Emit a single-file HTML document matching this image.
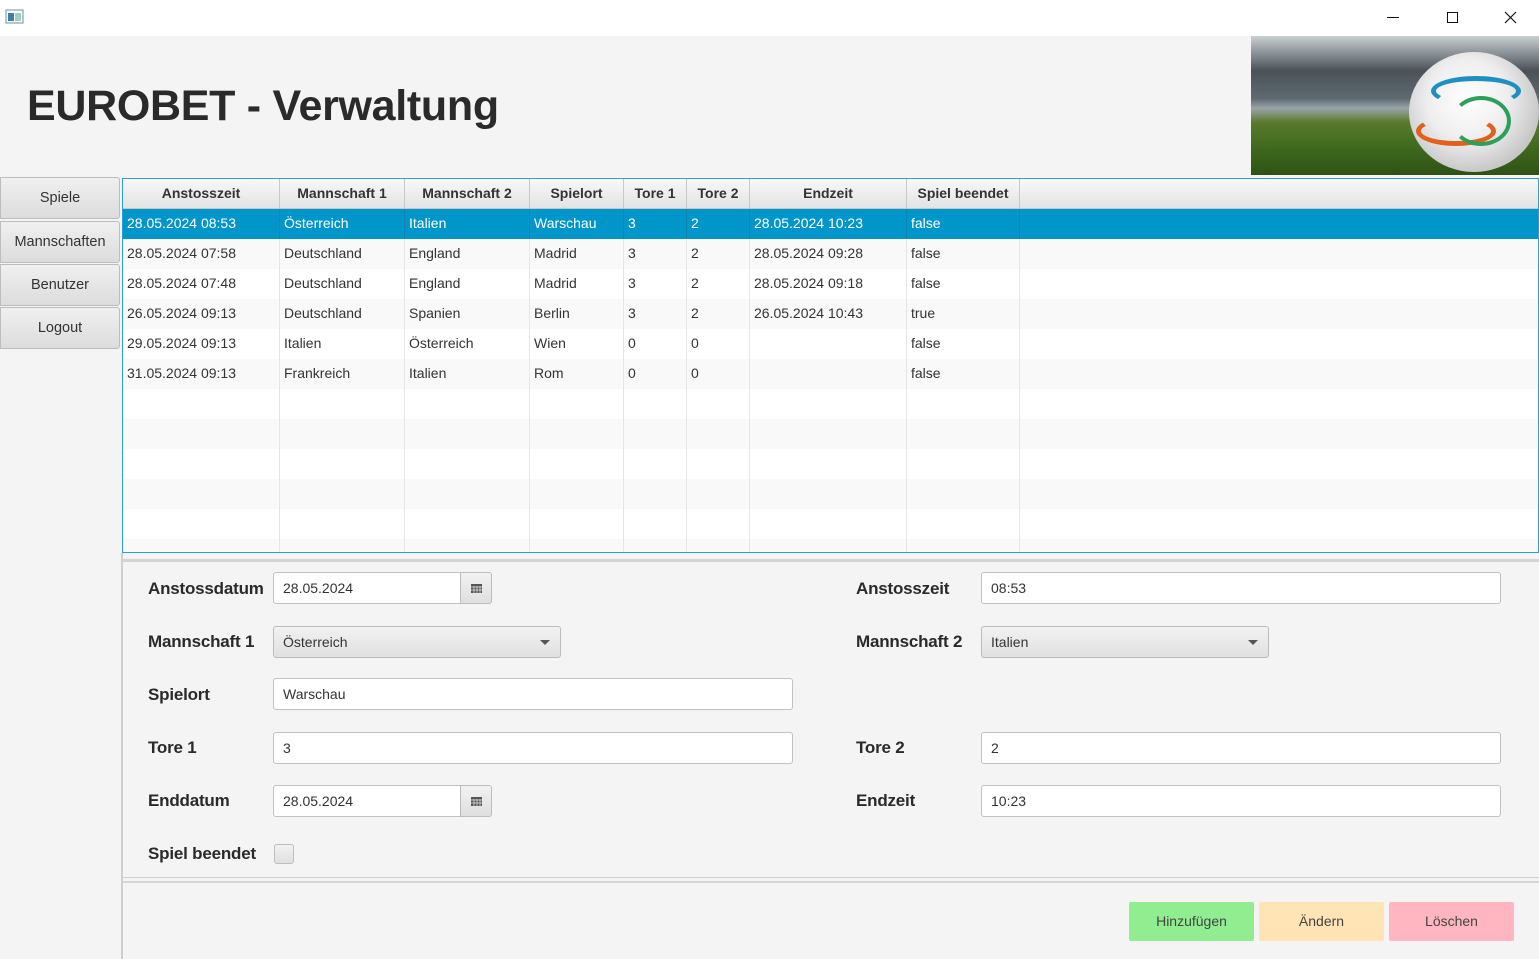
<!DOCTYPE html>
<html><head><meta charset="utf-8"><style>
*{box-sizing:border-box;margin:0;padding:0}
body{width:1539px;height:959px;background:#f4f4f4;font-family:"Liberation Sans",sans-serif;position:relative;overflow:hidden;color:#333}
.abs{position:absolute}
.tb{left:0;top:0;width:1539px;height:36px;background:#fff}
h1{position:absolute;left:27px;top:82px;font-size:43px;font-weight:bold;color:#2a2a2a;letter-spacing:-0.3px}
.nav{left:0;width:120px;height:42px;background:linear-gradient(#f0f0f0,#dcdcdc);border:1px solid #bdbdbd;border-radius:0 3px 3px 0;font-size:14.5px;text-align:center;line-height:40px;color:#333}
.tbl{left:122px;top:178px;width:1417px;height:375px;border:1px solid #2a9fd6;background:#fff;overflow:hidden}
.row{position:absolute;left:0;width:1417px;height:30px;font-size:14px;line-height:29px}
.row span{position:absolute;top:0;height:30px;padding-left:4px;border-right:1px solid #e6e6e6}
.hdr{background:linear-gradient(#f8f8f8,#e3e3e3);font-weight:bold;border-bottom:1px solid #c8c8c8}
.hdr span{text-align:center;padding:0;border-right:1px solid #c8c8c8}
.sel{background:#0096c9;color:#fff}
.sel span{border-right-color:#0a86b3}
.lbl{font-size:17px;font-weight:bold;color:#2a2a2a;letter-spacing:-0.2px}
.inp{background:#fff;border:1px solid #c2c2c2;border-radius:3px;height:32px;font-size:14px;line-height:30px;padding-left:9px}
.cmb{background:linear-gradient(#f2f2f2,#e0e0e0);border:1px solid #bcbcbc;border-radius:3px;height:32px;font-size:14px;line-height:30px;padding-left:9px}
.cal{background:linear-gradient(#f2f2f2,#dfdfdf);border:1px solid #bcbcbc;border-radius:0 3px 3px 0;width:32px;height:32px}
.btn{top:902px;height:39px;width:125px;font-size:14px;text-align:center;line-height:39px;color:#444;border-radius:2px}
</style></head><body>
<div class="abs tb">
<svg class="abs" style="left:5px;top:9px" width="20" height="16"><rect x="1" y="1" width="17" height="13" fill="#fff" stroke="#6a8fa8"/><rect x="3" y="4" width="6" height="8" fill="#3a7fa8"/><rect x="10" y="4" width="6" height="8" fill="#9fd0c0"/></svg>
<svg class="abs" style="left:1385px;top:10px" width="140" height="16"><line x1="2" y1="7.5" x2="14" y2="7.5" stroke="#111"/><rect x="62.5" y="2.5" width="10" height="10" fill="none" stroke="#111"/><path d="M120 2 L131 13 M131 2 L120 13" stroke="#111" stroke-width="1.2"/></svg>
</div>
<h1>EUROBET - Verwaltung</h1>
<div class="abs" style="left:1251px;top:36px;width:288px;height:139px;overflow:hidden;background:linear-gradient(#c9cfd2 0%,#8d9499 12%,#4b5257 25%,#5d6a70 45%,#9aa4a8 52%,#5b7a2e 62%,#3f6a1d 80%,#2e5214 100%)">
<div class="abs" style="left:158px;top:16px;width:130px;height:120px;border-radius:50%;background:radial-gradient(circle at 45% 40%,#fff 0%,#eee 40%,#bdbdbd 80%,#777 100%)"></div>
<div class="abs" style="left:180px;top:40px;width:90px;height:30px;border:5px solid #1e8fc0;border-radius:50%;border-bottom-color:transparent"></div>
<div class="abs" style="left:165px;top:80px;width:80px;height:30px;border:5px solid #e0601e;border-radius:50%;border-top-color:transparent"></div>
<div class="abs" style="left:200px;top:60px;width:60px;height:50px;border:4px solid #2aa05a;border-radius:50%;border-left-color:transparent"></div>
</div>
<div class="abs nav" style="top:177px">Spiele</div>
<div class="abs nav" style="top:221px">Mannschaften</div>
<div class="abs nav" style="top:264px">Benutzer</div>
<div class="abs nav" style="top:307px">Logout</div>
<div class="abs" style="left:121px;top:553px;width:2px;height:406px;background:#cfcfcf"></div>
<div class="abs tbl">
<div class="row hdr" style="top:0"><span style="left:0;width:157px">Anstosszeit</span><span style="left:157px;width:125px">Mannschaft 1</span><span style="left:282px;width:125px">Mannschaft 2</span><span style="left:407px;width:94px">Spielort</span><span style="left:501px;width:63px">Tore 1</span><span style="left:564px;width:63px">Tore 2</span><span style="left:627px;width:157px">Endzeit</span><span style="left:784px;width:113px">Spiel beendet</span></div>
<div class="row sel" style="top:30px"><span style="left:0;width:157px">28.05.2024 08:53</span><span style="left:157px;width:125px">Österreich</span><span style="left:282px;width:125px">Italien</span><span style="left:407px;width:94px">Warschau</span><span style="left:501px;width:63px">3</span><span style="left:564px;width:63px">2</span><span style="left:627px;width:157px">28.05.2024 10:23</span><span style="left:784px;width:113px">false</span></div>
<div class="row" style="top:60px;background:#f9f9f9"><span style="left:0;width:157px">28.05.2024 07:58</span><span style="left:157px;width:125px">Deutschland</span><span style="left:282px;width:125px">England</span><span style="left:407px;width:94px">Madrid</span><span style="left:501px;width:63px">3</span><span style="left:564px;width:63px">2</span><span style="left:627px;width:157px">28.05.2024 09:28</span><span style="left:784px;width:113px">false</span></div>
<div class="row" style="top:90px"><span style="left:0;width:157px">28.05.2024 07:48</span><span style="left:157px;width:125px">Deutschland</span><span style="left:282px;width:125px">England</span><span style="left:407px;width:94px">Madrid</span><span style="left:501px;width:63px">3</span><span style="left:564px;width:63px">2</span><span style="left:627px;width:157px">28.05.2024 09:18</span><span style="left:784px;width:113px">false</span></div>
<div class="row" style="top:120px;background:#f9f9f9"><span style="left:0;width:157px">26.05.2024 09:13</span><span style="left:157px;width:125px">Deutschland</span><span style="left:282px;width:125px">Spanien</span><span style="left:407px;width:94px">Berlin</span><span style="left:501px;width:63px">3</span><span style="left:564px;width:63px">2</span><span style="left:627px;width:157px">26.05.2024 10:43</span><span style="left:784px;width:113px">true</span></div>
<div class="row" style="top:150px"><span style="left:0;width:157px">29.05.2024 09:13</span><span style="left:157px;width:125px">Italien</span><span style="left:282px;width:125px">Österreich</span><span style="left:407px;width:94px">Wien</span><span style="left:501px;width:63px">0</span><span style="left:564px;width:63px">0</span><span style="left:627px;width:157px"></span><span style="left:784px;width:113px">false</span></div>
<div class="row" style="top:180px;background:#f9f9f9"><span style="left:0;width:157px">31.05.2024 09:13</span><span style="left:157px;width:125px">Frankreich</span><span style="left:282px;width:125px">Italien</span><span style="left:407px;width:94px">Rom</span><span style="left:501px;width:63px">0</span><span style="left:564px;width:63px">0</span><span style="left:627px;width:157px"></span><span style="left:784px;width:113px">false</span></div>
<div class="row" style="top:210px"><span style="left:0;width:157px"></span><span style="left:157px;width:125px"></span><span style="left:282px;width:125px"></span><span style="left:407px;width:94px"></span><span style="left:501px;width:63px"></span><span style="left:564px;width:63px"></span><span style="left:627px;width:157px"></span><span style="left:784px;width:113px"></span></div>
<div class="row" style="top:240px;background:#f9f9f9"><span style="left:0;width:157px"></span><span style="left:157px;width:125px"></span><span style="left:282px;width:125px"></span><span style="left:407px;width:94px"></span><span style="left:501px;width:63px"></span><span style="left:564px;width:63px"></span><span style="left:627px;width:157px"></span><span style="left:784px;width:113px"></span></div>
<div class="row" style="top:270px"><span style="left:0;width:157px"></span><span style="left:157px;width:125px"></span><span style="left:282px;width:125px"></span><span style="left:407px;width:94px"></span><span style="left:501px;width:63px"></span><span style="left:564px;width:63px"></span><span style="left:627px;width:157px"></span><span style="left:784px;width:113px"></span></div>
<div class="row" style="top:300px;background:#f9f9f9"><span style="left:0;width:157px"></span><span style="left:157px;width:125px"></span><span style="left:282px;width:125px"></span><span style="left:407px;width:94px"></span><span style="left:501px;width:63px"></span><span style="left:564px;width:63px"></span><span style="left:627px;width:157px"></span><span style="left:784px;width:113px"></span></div>
<div class="row" style="top:330px"><span style="left:0;width:157px"></span><span style="left:157px;width:125px"></span><span style="left:282px;width:125px"></span><span style="left:407px;width:94px"></span><span style="left:501px;width:63px"></span><span style="left:564px;width:63px"></span><span style="left:627px;width:157px"></span><span style="left:784px;width:113px"></span></div>
<div class="row" style="top:360px;background:#f9f9f9"><span style="left:0;width:157px"></span><span style="left:157px;width:125px"></span><span style="left:282px;width:125px"></span><span style="left:407px;width:94px"></span><span style="left:501px;width:63px"></span><span style="left:564px;width:63px"></span><span style="left:627px;width:157px"></span><span style="left:784px;width:113px"></span></div>
</div>
<div class="abs" style="left:123px;top:559px;width:1416px;height:3px;background:#d4d4d4"></div>
<div class="abs" style="left:123px;top:877px;width:1416px;height:1px;background:#d0d0d0"></div>
<div class="abs" style="left:123px;top:881px;width:1416px;height:2px;background:#d6d6d6"></div>

<div class="abs lbl" style="left:148px;top:579px">Anstossdatum</div>
<div class="abs inp" style="left:273px;top:572px;width:188px;border-radius:3px 0 0 3px">28.05.2024</div>
<div class="abs cal" style="left:460px;top:572px"><svg width="30" height="30"><g fill="#555"><rect x="10" y="11" width="11" height="9"/></g><g stroke="#ddd" stroke-width="0.8"><line x1="10" y1="14" x2="21" y2="14"/><line x1="10" y1="17" x2="21" y2="17"/><line x1="13" y1="13" x2="13" y2="20"/><line x1="16" y1="13" x2="16" y2="20"/><line x1="19" y1="13" x2="19" y2="20"/></g></svg></div>
<div class="abs lbl" style="left:856px;top:579px">Anstosszeit</div>
<div class="abs inp" style="left:981px;top:572px;width:520px">08:53</div>

<div class="abs lbl" style="left:148px;top:632px">Mannschaft 1</div>
<div class="abs cmb" style="left:273px;top:626px;width:288px">Österreich<svg class="abs" style="right:10px;top:13px" width="10" height="6"><path d="M0 0H10L5 5Z" fill="#555"/></svg></div>
<div class="abs lbl" style="left:856px;top:632px">Mannschaft 2</div>
<div class="abs cmb" style="left:981px;top:626px;width:288px">Italien<svg class="abs" style="right:10px;top:13px" width="10" height="6"><path d="M0 0H10L5 5Z" fill="#555"/></svg></div>

<div class="abs lbl" style="left:148px;top:685px">Spielort</div>
<div class="abs inp" style="left:273px;top:678px;width:520px">Warschau</div>

<div class="abs lbl" style="left:148px;top:738px">Tore 1</div>
<div class="abs inp" style="left:273px;top:732px;width:520px">3</div>
<div class="abs lbl" style="left:856px;top:738px">Tore 2</div>
<div class="abs inp" style="left:981px;top:732px;width:520px">2</div>

<div class="abs lbl" style="left:148px;top:791px">Enddatum</div>
<div class="abs inp" style="left:273px;top:785px;width:188px;border-radius:3px 0 0 3px">28.05.2024</div>
<div class="abs cal" style="left:460px;top:785px"><svg width="30" height="30"><g fill="#555"><rect x="10" y="11" width="11" height="9"/></g><g stroke="#ddd" stroke-width="0.8"><line x1="10" y1="14" x2="21" y2="14"/><line x1="10" y1="17" x2="21" y2="17"/><line x1="13" y1="13" x2="13" y2="20"/><line x1="16" y1="13" x2="16" y2="20"/><line x1="19" y1="13" x2="19" y2="20"/></g></svg></div>
<div class="abs lbl" style="left:856px;top:791px">Endzeit</div>
<div class="abs inp" style="left:981px;top:785px;width:520px">10:23</div>

<div class="abs lbl" style="left:148px;top:844px">Spiel beendet</div>
<div class="abs" style="left:274px;top:844px;width:20px;height:20px;border:1px solid #bdbdbd;border-radius:3px;background:linear-gradient(#f2f2f2,#e0e0e0)"></div>

<div class="abs btn" style="left:1129px;background:#90ee90">Hinzufügen</div>
<div class="abs btn" style="left:1259px;background:#ffe4b5">Ändern</div>
<div class="abs btn" style="left:1389px;background:#ffb6c1">Löschen</div>
</body></html>
